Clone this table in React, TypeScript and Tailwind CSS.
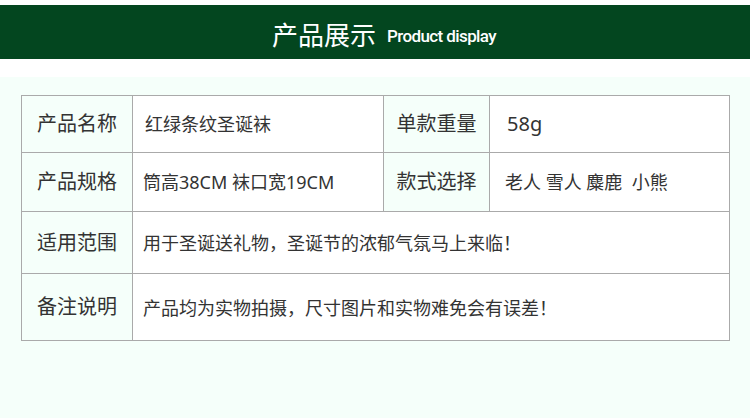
const font = { fontFamily: '"Noto Sans", "Noto Sans CJK SC", sans-serif' };
const cjk = { fontFamily: '"Noto Sans CJK SC", sans-serif' };

const Label = ({ text, className = "" }: { text: string; className?: string }) => (
    <div className={`flex items-center justify-center bg-[#f5fffa] border-r border-b border-[#aaaaaa] text-[20px] text-[#333333] ${className}`}>
        {text}
    </div>
);

const Value = ({ text, className = "", cn = false }: { text: string; className?: string; cn?: boolean }) => (
    <div
        className={`flex items-center bg-white border-r border-b border-[#aaaaaa] text-[#333333] ${className}`}
        style={cn ? cjk : undefined}
    >
        {text}
    </div>
);

const App = () => {
    return (
        <div className="w-[750px] h-[418px] bg-[#f5fffa] overflow-hidden" style={font}>
            <div className="bg-white pt-[5px] pb-[18px]">
                <header className="h-[54px] bg-[#03461f] flex items-center justify-center gap-[11px] text-white pt-[4px] pl-[18px]">
                    <span className="text-[26px] leading-none" style={cjk}>
                        产品展示
                    </span>
                    <span className="text-[17px] font-medium leading-none tracking-[-0.6px] pt-[4px]" style={{ fontFamily: 'Roboto, sans-serif' }}>
                        Product display
                    </span>
                </header>
            </div>

            <section className="pt-[18px] pl-[21px]">
                <div className="grid grid-cols-[111px_251px_106px_240px] grid-rows-[57px_59px_62px_67px] w-[709px] border-l border-t border-[#aaaaaa]">
                    <Label text="产品名称" />
                    <Value text="红绿条纹圣诞袜" className="pl-3 text-[18px]" />
                    <Label text="单款重量" />
                    <Value text="58g" className="pl-[17px] text-[20px]" />

                    <Label text="产品规格" />
                    <Value text="筒高38CM 袜口宽19CM" className="pl-[10px] text-[18px]" />
                    <Label text="款式选择" />
                    <Value text={"老人 雪人 麋鹿\u00a0 小熊"} className="pl-[15px] text-[18px]" />

                    <Label text="适用范围" />
                    <Value cn text="用于圣诞送礼物，圣诞节的浓郁气氛马上来临！" className="col-span-3 pl-[10px] text-[18px]" />

                    <Label text="备注说明" />
                    <Value cn text="产品均为实物拍摄，尺寸图片和实物难免会有误差！" className="col-span-3 pl-[10px] text-[18px]" />
                </div>
            </section>
        </div>
    );
};

export default App;
